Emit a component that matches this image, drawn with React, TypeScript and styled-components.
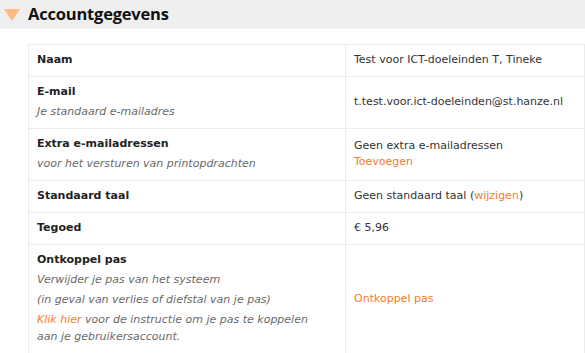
import * as React from 'react'
import styled, { createGlobalStyle } from 'styled-components'

const GlobalStyle = createGlobalStyle`
  html, body {
    margin: 0;
    padding: 0;
    background: #ffffff;
  }
  body {
    font-family: 'DejaVu Sans', Verdana, sans-serif;
    font-size: 11px;
    color: #333333;
  }
`

const Page = styled.div`
  width: 585px;
  height: 353px;
  overflow: hidden;
`

const Header = styled.div`
  display: flex;
  align-items: center;
  height: 29px;
  background: #efefef;
  padding-left: 4px;
  gap: 8px;
`

const Triangle = styled.span`
  width: 0;
  height: 0;
  border-left: 8px solid transparent;
  border-right: 8px solid transparent;
  border-top: 12px solid #fdb97e;
  margin-top: 1px;
`

const Title = styled.h2`
  margin: 0 0 2px;
  font-family: 'Open Sans', 'Noto Sans', sans-serif;
  font-weight: 700;
  font-size: 16.5px;
  color: #111111;
  letter-spacing: -0.2px;
`

const Table = styled.table`
  margin: 15px 0 0 28px;
  width: 557px;
  border-collapse: collapse;
  border: 1px solid #ececec;
`

const Row = styled.tr`
  border-bottom: 1px solid #ececec;
`

const LabelCell = styled.td`
  width: 284px;
  padding: 7px 24px 8px 8px;
  vertical-align: top;
  line-height: 16px;
  border-right: 1px solid #ececec;
`

const ValueCell = styled.td`
  padding: 7px 8px 8px;
  vertical-align: middle;
  line-height: 16px;
  color: #333333;
`

const Label = styled.div`
  font-weight: 700;
  color: #222222;
`

const Note = styled.p`
  margin: 3px 0 0;
  line-height: 17px;
  font-style: italic;
  color: #6a6a6a;
`

const Link = styled.a`
  color: #f47c2c;
  text-decoration: none;
  cursor: pointer;
`

const Line = styled.div``

export default function App() {
  return (
    <Page>
      <GlobalStyle />
      <Header>
        <Triangle />
        <Title>Accountgegevens</Title>
      </Header>
      <Table>
        <tbody>
          <Row>
            <LabelCell>
              <Label>Naam</Label>
            </LabelCell>
            <ValueCell>Test voor ICT-doeleinden T, Tineke</ValueCell>
          </Row>
          <Row>
            <LabelCell>
              <Label>E-mail</Label>
              <Note>Je standaard e-mailadres</Note>
            </LabelCell>
            <ValueCell>t.test.voor.ict-doeleinden@st.hanze.nl</ValueCell>
          </Row>
          <Row>
            <LabelCell>
              <Label>Extra e-mailadressen</Label>
              <Note>voor het versturen van printopdrachten</Note>
            </LabelCell>
            <ValueCell>
              <Line>Geen extra e-mailadressen</Line>
              <Line>
                <Link>Toevoegen</Link>
              </Line>
            </ValueCell>
          </Row>
          <Row>
            <LabelCell>
              <Label>Standaard taal</Label>
            </LabelCell>
            <ValueCell>
              Geen standaard taal (<Link>wijzigen</Link>)
            </ValueCell>
          </Row>
          <Row>
            <LabelCell>
              <Label>Tegoed</Label>
            </LabelCell>
            <ValueCell>€ 5,96</ValueCell>
          </Row>
          <Row>
            <LabelCell>
              <Label>Ontkoppel pas</Label>
              <Note>Verwijder je pas van het systeem</Note>
              <Note>(in geval van verlies of diefstal van je pas)</Note>
              <Note>
                <Link>Klik hier</Link> voor de instructie om je pas te koppelen
                aan je gebruikersaccount.
              </Note>
            </LabelCell>
            <ValueCell>
              <Link>Ontkoppel pas</Link>
            </ValueCell>
          </Row>
        </tbody>
      </Table>
    </Page>
  )
}
